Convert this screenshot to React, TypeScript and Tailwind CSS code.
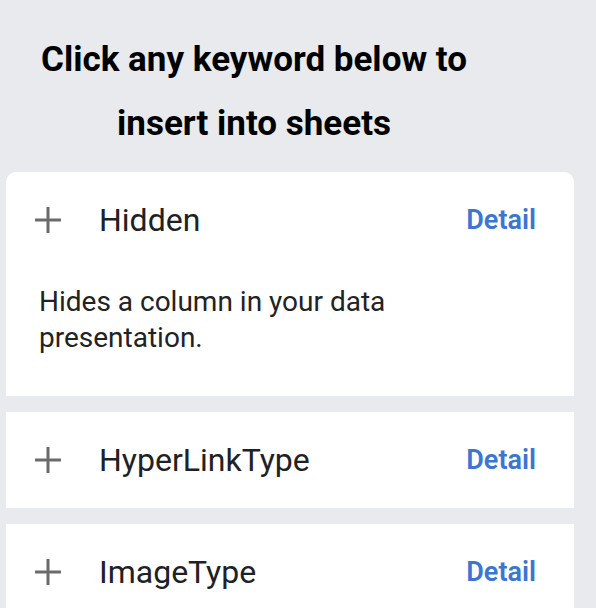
import React from 'react';

const items = [
    { name: 'Hidden', description: 'Hides a column in your data presentation.', open: true },
    { name: 'HyperLinkType', description: '', open: false },
    { name: 'ImageType', description: '', open: false },
];

const PlusIcon: React.FC = () => (
    <svg width="30" height="30" viewBox="0 0 30 30" className="shrink-0">
        <path d="M15 2v26M2 15h26" stroke="#6b6b6b" strokeWidth="3" fill="none" />
    </svg>
);

const KeywordCard: React.FC<{ name: string; description: string; open: boolean; first: boolean }> = ({ name, description, open, first }) => (
    <div className={first ? 'bg-white rounded-t-[10px]' : 'bg-white'}>
        <div className="flex items-center h-[96px] pl-[27px] pr-[38px]">
            <PlusIcon />
            <span className="ml-[36px] text-[32px] text-[#202124] leading-none">{name}</span>
            <span className="ml-auto text-[27px] font-semibold text-[#3a76d2] leading-none">Detail</span>
        </div>
        {open && (
            <div className="pl-[33px] pt-[16px] pb-[40px]">
                <p className="w-[400px] text-[28px] leading-[36px] text-[#222222]">{description}</p>
            </div>
        )}
    </div>
);

export default function App() {
    return (
        <div className="w-[596px] h-[608px] overflow-hidden bg-[#e8eaee]" style={{ fontFamily: 'Roboto, "Noto Sans", sans-serif' }}>
            <div className="ml-[6px] w-[568px]">
                <h1 className="pt-[28px] pb-[16px] pr-[72px] text-center text-[35px] leading-[64px] font-bold text-black">
                    Click any keyword below to insert into sheets
                </h1>
                <div className="flex flex-col gap-4">
                    {items.map((item, i) => (
                        <KeywordCard key={item.name} {...item} first={i === 0} />
                    ))}
                </div>
            </div>
        </div>
    );
}
